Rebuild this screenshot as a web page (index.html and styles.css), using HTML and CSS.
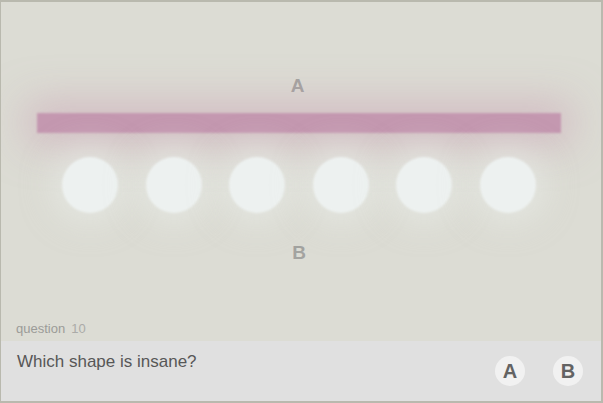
FILE: index.html
```html
<!DOCTYPE html>
<html>
<head>
<meta charset="utf-8">
<link rel="stylesheet" href="styles.css">
</head>
<body>
<div class="frame">
  <div class="stage">
    <div class="label label-a">A</div>
    <div class="bar"></div>
    <div class="dots">
      <span class="dot"></span>
      <span class="dot"></span>
      <span class="dot"></span>
      <span class="dot"></span>
      <span class="dot"></span>
      <span class="dot"></span>
    </div>
    <div class="label label-b">B</div>
    <div class="qnum"><span class="qword">question</span><span class="qval">10</span></div>
  </div>
  <div class="panel">
    <div class="prompt">Which shape is insane?</div>
    <div class="answers">
      <button class="answer">A</button>
      <button class="answer">B</button>
    </div>
  </div>
</div>
</body>
</html>
```
FILE: styles.css
```css
html, body {
  margin: 0;
  padding: 0;
  background: #dcdcd4;
}
body {
  font-family: "Liberation Sans", Arial, sans-serif;
}
.frame {
  width: 603px;
  height: 403px;
  box-sizing: border-box;
  border-style: solid;
  border-color: #b9b9ae;
  border-width: 2px 2px 2px 1px;
  display: flex;
  flex-direction: column;
  overflow: hidden;
}
.stage {
  height: 339px;
  box-sizing: border-box;
  background: #dcdcd4;
  padding: 73px 0 4px 36px;
  display: flex;
  flex-direction: column;
}
.label {
  width: 524px;
  text-align: center;
  font-weight: bold;
  font-size: 19px;
  line-height: 22px;
  height: 22px;
  color: #a3a3a0;
}
.label-a {
  padding-right: 3px;
  box-sizing: border-box;
}
.bar {
  width: 524px;
  height: 20px;
  margin-top: 16px;
  background: #c498b0;
  box-shadow: 0 0 40px 10px rgba(200, 152, 176, 0.5);
  filter: blur(0.8px);
}
.dots {
  margin-top: 24px;
  margin-left: 25px;
  width: 474px;
  display: flex;
  justify-content: space-between;
}
.dot {
  width: 56px;
  height: 56px;
  border-radius: 50%;
  background: #edf1f0;
  box-shadow: 0 0 30px 10px rgba(236, 239, 236, 0.5);
  filter: blur(1.2px);
}
.label-b {
  margin-top: 29px;
}
.qnum {
  margin-top: 57px;
  margin-left: -21px;
  font-size: 13px;
  line-height: 16px;
  height: 16px;
  display: flex;
  gap: 6px;
}
.qword {
  color: #9b9b98;
}
.qval {
  color: #ababa8;
}
.panel {
  height: 60px;
  background: #e0e0e0;
  display: flex;
  justify-content: space-between;
  align-items: center;
  padding: 0 18px 0 16px;
}
.prompt {
  align-self: flex-start;
  margin-top: 11px;
  font-size: 17px;
  line-height: 20px;
  color: #575757;
}
.answers {
  display: flex;
  gap: 28px;
}
.answer {
  width: 30px;
  height: 30px;
  border-radius: 50%;
  border: none;
  padding: 0;
  background: #f1f1f1;
  color: #636363;
  font-family: "Liberation Sans", Arial, sans-serif;
  font-weight: bold;
  font-size: 20px;
  line-height: 30px;
  text-align: center;
}
```
